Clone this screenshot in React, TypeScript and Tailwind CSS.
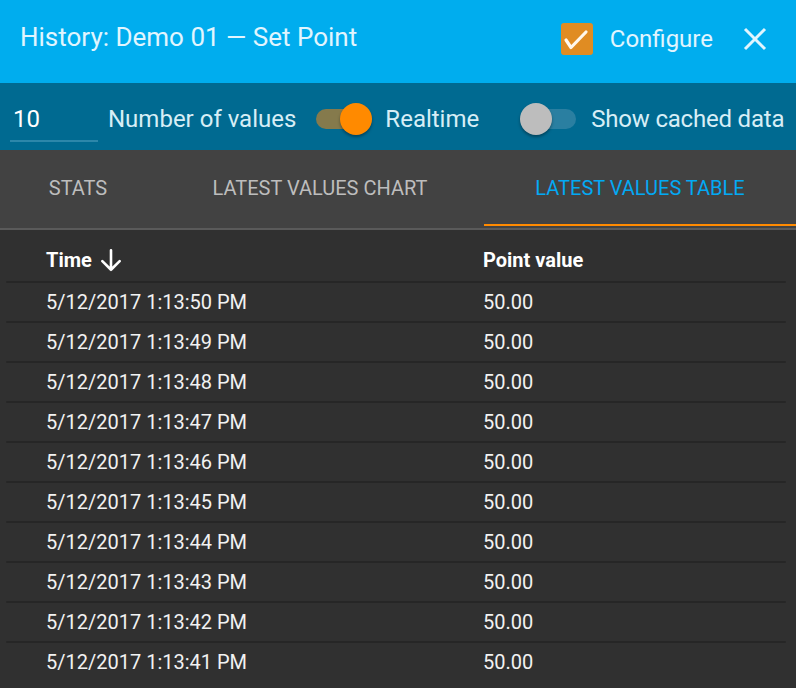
import React, { useState } from "react";

const rows = [
  "5/12/2017 1:13:50 PM",
  "5/12/2017 1:13:49 PM",
  "5/12/2017 1:13:48 PM",
  "5/12/2017 1:13:47 PM",
  "5/12/2017 1:13:46 PM",
  "5/12/2017 1:13:45 PM",
  "5/12/2017 1:13:44 PM",
  "5/12/2017 1:13:43 PM",
  "5/12/2017 1:13:42 PM",
  "5/12/2017 1:13:41 PM",
];

const Toggle: React.FC<{ on: boolean; onClick: () => void }> = ({ on, onClick }) => (
  <button onClick={onClick} className="relative w-[60px] h-[32px] flex items-center">
    <span
      className={
        on
          ? "absolute left-0 w-[54px] h-[20px] rounded-full bg-[#857a4c]"
          : "absolute left-[4px] w-[52px] h-[20px] rounded-full bg-[#2a7fa1]"
      }
    />
    <span
      className={
        on
          ? "absolute left-[24px] w-[32px] h-[32px] rounded-full bg-[#ff8a00] shadow-[0_2px_3px_rgba(0,0,0,0.35)]"
          : "absolute left-0 w-[32px] h-[32px] rounded-full bg-[#bdbdbd] shadow-[0_2px_3px_rgba(0,0,0,0.35)]"
      }
    />
  </button>
);

const App: React.FC = () => {
  const [realtime, setRealtime] = useState(true);
  const [cached, setCached] = useState(false);
  const [tab, setTab] = useState(2);

  const tabs = [
    { label: "Stats", w: "w-[156px]" },
    { label: "Latest values chart", w: "w-[328px]" },
    { label: "Latest values table", w: "flex-1" },
  ];

  return (
    <div className="w-[796px] h-[688px] overflow-hidden bg-[#303030] font-['Roboto',sans-serif]">
      {/* title bar */}
      <div className="h-[83px] bg-[#00adee] flex items-center pl-5 pr-[29px] text-[#e1f5fe]">
        <h1 className="text-[26px] flex-1 -mt-[9px]">History: Demo 01 — Set Point</h1>
        <div className="flex items-center -mt-[6px]">
          <span className="w-[32px] h-[32px] rounded-[3px] bg-[#e08c22] flex">
            <svg width="32" height="32" viewBox="0 0 32 32" fill="none" stroke="#fff8ec" strokeWidth="3.2" strokeLinecap="round" strokeLinejoin="round">
              <path d="M5 17l5 7.5L25 9" />
            </svg>
          </span>
          <span className="ml-[17px] text-[24px]">Configure</span>
          <svg className="ml-[30px]" width="24" height="24" viewBox="0 0 24 24" fill="none" stroke="#e1f5fe" strokeWidth="3">
            <path d="M2 2L22 22M22 2L2 22" />
          </svg>
        </div>
      </div>

      {/* toolbar */}
      <div className="h-[67px] bg-[#006a91] flex items-center pt-[4px] text-[#d7eef6] text-[24px] whitespace-nowrap">
        <div className="self-end mb-[8px] ml-[10px] w-[88px] h-[44px] flex items-center pl-[3px] border-b-2 border-[#2c87aa] text-white">
          10
        </div>
        <span className="ml-[10px]">Number of values</span>
        <div className="ml-[20px]">
          <Toggle on={realtime} onClick={() => setRealtime(!realtime)} />
        </div>
        <span className="ml-[9px]">Realtime</span>
        <div className="ml-[41px]">
          <Toggle on={cached} onClick={() => setCached(!cached)} />
        </div>
        <span className="ml-[11px] tracking-[-0.2px]">Show cached data</span>
      </div>

      {/* tabs */}
      <div className="h-[78px] bg-[#424242] flex">
        {tabs.map((t, i) => (
          <button
            key={t.label}
            onClick={() => setTab(i)}
            className={
              t.w +
              " relative h-full flex items-center justify-center uppercase text-[20px] " +
              (tab === i ? "text-[#03a9f4]" : "text-[#bdbdbd]")
            }
          >
            <span className="-mt-[2px]">{t.label}</span>
            {tab === i && <span className="absolute left-0 right-0 bottom-[2px] h-[2px] bg-[#ff8a00]" />}
          </button>
        ))}
      </div>
      <div className="h-[2px] bg-[#5a5a5a]" />

      {/* table */}
      <div className="ml-[6px] mr-[10px] text-[#f2f2f2]">
        <div className="h-[51px] flex items-center pt-[8px] font-bold text-white text-[20px]">
          <div className="w-[477px] pl-[40px] flex items-center">
            Time
            <svg className="ml-[6px]" width="26" height="26" viewBox="0 0 24 24" fill="none" stroke="white" strokeWidth="2.4" strokeLinecap="round" strokeLinejoin="round">
              <path d="M12 3v18M4 13l8 8 8-8" />
            </svg>
          </div>
          <div>Point value</div>
        </div>
        {rows.map((r) => (
          <div key={r}>
            <div className="h-[2px] rounded-full bg-[#262626]" />
            <div className="h-[38px] flex items-center text-[20px]">
              <div className="w-[477px] pl-[40px]">{r}</div>
              <div>50.00</div>
            </div>
          </div>
        ))}
      </div>
    </div>
  );
};

export default App;
